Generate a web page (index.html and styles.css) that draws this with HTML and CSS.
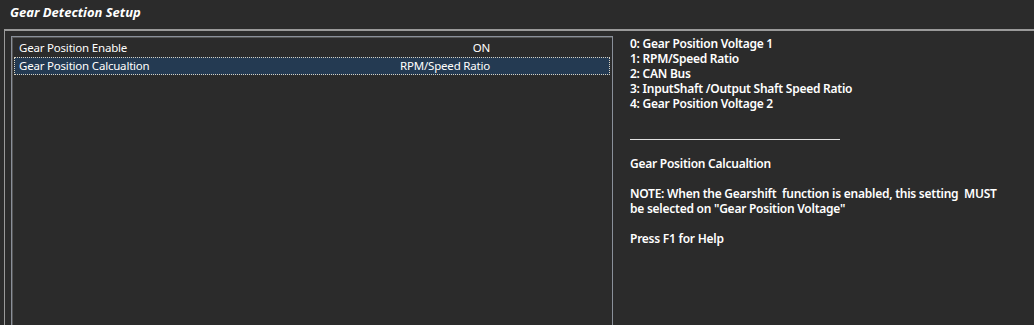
FILE: index.html
```html
<!DOCTYPE html>
<html lang="en">
<head>
    <meta charset="UTF-8">
    <title>Gear Detection Setup</title>
    <link rel="stylesheet" href="styles.css">
</head>
<body>
    <div class="title">Gear Detection Setup</div>
    <div class="frame">
        <div class="list">
            <div class="row">
                <span class="name">Gear Position Enable</span>
                <span class="val">ON</span>
            </div>
            <div class="row selected">
                <span class="name">Gear Position Calcualtion</span>
                <span class="val">RPM/Speed Ratio</span>
            </div>
        </div>
        <div class="help">
            <div class="options">
                <div>0: Gear Position Voltage 1</div>
                <div>1: RPM/Speed Ratio</div>
                <div>2: CAN Bus</div>
                <div>3: InputShaft /Output Shaft Speed Ratio</div>
                <div>4: Gear Position Voltage 2</div>
            </div>
            <div class="sep"></div>
            <p>Gear Position Calcualtion</p>
            <p class="note">NOTE: When the Gearshift&nbsp; function is enabled, this setting&nbsp; MUST<br>be selected on "Gear Position Voltage"</p>
            <p>Press F1 for Help</p>
        </div>
    </div>
</body>
</html>
```

FILE: styles.css
```css
* {
    margin:0; padding:0; border:0;
    box-sizing: border-box;
}
html, body { height:100%; }
body {
    background: #2b2b2b;
    color: #fff;
    font-family: "Noto Sans", sans-serif;
    font-size: 12px;
    overflow: hidden;
}
.title {
    height: 29px;
    padding: 3px 0 0 10px;
    font-size: 13px;
    font-weight: bold;
    font-style: italic;
    line-height: 18px;
}
.frame {
    display: flex;
    height: 296px;
    margin-left: 4px;
    border-top: 2px solid #9a9a9a;
    border-left: 1px solid #9a9a9a;
}
.list {
    width: 602px;
    margin: 5px 0 0 6px;
    padding: 2px 2px 0 2px;
    border: 1px solid #8a909a;
    border-bottom: 0;
    box-shadow: inset 1px 1px 0 #555;
    font-size: 11.5px;
    letter-spacing: -0.2px;
}
.row {
    display: flex;
    height: 18px;
    line-height: 16px;
    padding: 0 4px;
    border: 1px dotted transparent;
}
.row.selected {
    background: #243a52;
    border-color: #d8d0c0;
}
.name { width: 362px; }
.val {
    width: 109px;
    text-align: right;
    white-space: nowrap;
}
.help {
    flex: 1;
    padding: 5px 0 0 17px;
    font-weight: 600;
    line-height: 15px;
    letter-spacing: -0.25px;
}
.sep {
    width: 210px;
    height: 1px;
    margin: 28px 0 16px;
    background: #e0e0e0;
}
.help p { margin-bottom: 15px; }
```
